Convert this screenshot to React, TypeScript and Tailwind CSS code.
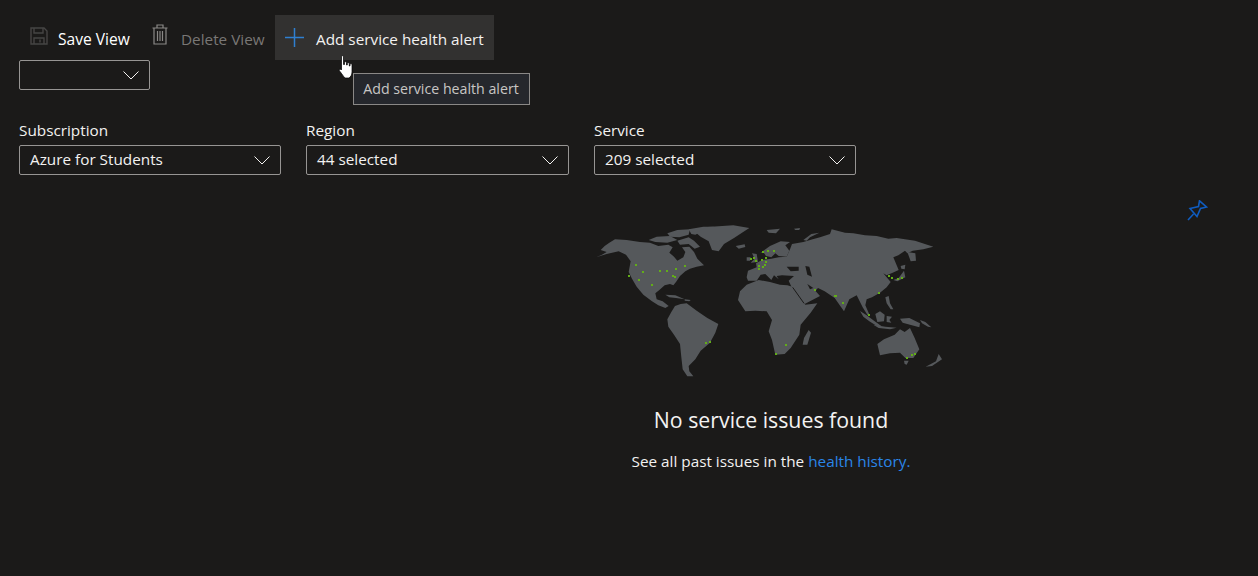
const landShapes = [
  // north america
  "M18 124 36 116 50 108 32 102 44 90 58 80 75 70 110 72 150 78 180 80 205 90 235 86 248 94 238 110 252 122 262 134 280 124 286 108 276 94 298 92 312 108 322 128 342 148 320 152 300 158 286 166 270 180 258 198 250 208 240 204 224 208 208 222 196 232 200 250 218 256 236 270 226 276 205 268 186 256 160 236 140 212 126 188 116 168 122 136 108 116 86 106 50 114Z",
  // canadian arctic
  "M176 72 200 62 240 60 262 72 232 80 196 78Z",
  "M232 52 262 42 300 40 296 56 268 64 240 62Z",
  "M262 74 296 64 312 74 330 92 314 98 296 84 270 86Z",
  "M296 40 340 32 372 32 340 44 316 56 304 54Z",
  // greenland
  "M318 50 352 33 430 28 478 36 456 50 432 66 402 84 386 106 366 102 356 76 332 62Z",
  // iceland
  "M437 90 464 85 466 93 446 98Z",
  // caribbean
  "M226 236 256 238 284 250 258 246 238 244Z",
  "M284 250 302 252 298 256 284 254Z",
  // south america
  "M232 310 244 288 255 270 272 264 290 262 320 284 352 306 385 324 376 350 360 380 332 404 316 430 296 450 298 466 310 481 292 481 278 460 274 424 270 384 252 356 235 332Z",
  // africa
  "M444 252 450 226 470 206 506 192 540 198 570 206 592 208 612 214 632 248 646 266 682 262 662 290 632 326 628 356 602 396 584 414 556 416 546 372 536 346 546 312 530 286 496 284 466 286Z",
  // madagascar
  "M638 386 642 366 656 342 663 350 652 386Z",
  // uk, ireland
  "M486 112 500 114 504 138 482 140 494 128Z",
  "M470 124 482 124 480 134 470 134Z",
  // svalbard and novaya zemlya
  "M530 42 570 38 558 52 536 50Z",
  "M612 38 630 36 628 42 616 42Z",
  "M640 72 664 54 688 50 660 64 650 74Z",
  // scandinavia
  "M510 112 540 90 572 76 600 78 586 88 598 104 590 122 566 120 556 112 544 124 528 120 520 108Z",
  // eurasia
  "M470 184 474 164 500 154 498 142 516 132 544 128 566 124 590 122 600 100 606 84 640 78 668 70 690 64 720 54 725 40 765 50 790 52 825 58 860 60 895 68 920 66 975 74 1030 92 1000 100 968 104 952 112 945 104 925 118 910 124 926 162 908 170 890 178 880 172 902 198 890 214 870 230 846 244 830 250 826 268 840 300 832 296 818 274 800 238 778 250 762 286 734 246 704 226 684 216 676 224 690 240 644 264 622 244 606 216 596 194 612 180 576 178 560 180 566 190 552 178 544 192 526 174 512 176 500 194 474 194Z",
  // kamchatka area
  "M952 108 976 112 978 134 962 136Z",
  // japan
  "M910 192 926 186 942 164 946 184 922 196Z",
  "M932 150 946 146 944 160 934 158Z",
  // southeast asia
  "M886 244 896 240 900 262 910 280 902 280 890 262Z",
  "M810 285 830 298 852 314 874 330 864 332 838 316 820 302Z",
  "M856 294 870 286 884 296 882 316 862 318Z",
  "M850 326 886 332 920 335 900 340 866 336Z",
  "M890 300 906 302 898 312 904 320 890 318Z",
  "M930 308 958 306 990 322 988 334 960 326 938 320Z",
  "M990 312 1006 318 1024 334 1014 332 996 322Z",
  // australia
  "M862 384 882 370 914 356 930 340 944 348 960 336 974 366 988 400 970 426 946 426 930 410 900 412 870 418Z",
  "M942 434 956 434 950 446 944 444Z",
  // new zealand
  "M1007 452 1038 436 1046 414 1056 430 1026 450Z",
];

const darkShapes = [
  "M590 152 626 152 626 164 602 166Z",
  "M646 150 658 152 666 182 652 176Z",
  "M652 204 670 216 660 220Z",
];

const dots = [
  [138, 148], [159, 168], [118, 179], [146, 193], [186, 207], [211, 166], [230, 165], [257, 159],
  [285, 150], [250, 180], [255, 183], [482, 128], [491, 127], [499, 136], [516, 132], [527, 127],
  [527, 138], [526, 147], [518, 152], [507, 151], [507, 160], [518, 109], [533, 106], [551, 104],
  [675, 221], [735, 240], [738, 241], [759, 260], [838, 297], [866, 230], [896, 181], [905, 187],
  [925, 189], [937, 185], [349, 380], [360, 377], [589, 386], [559, 414], [951, 426], [967, 417], [975, 413],
];

function Chevron() {
  return (
    <svg width="16" height="16" viewBox="0 0 16 16" fill="none" stroke="#f3f2f1" strokeWidth="1">
      <path d="M0.5 4.5 8 12 15.5 4.5" />
    </svg>
  );
}

function Select({ value, width }: { value?: string; width: string }) {
  return (
    <div className={`flex h-[30px] items-center justify-between rounded-[2px] border border-[#979593] px-[10px] text-[#f3f2f1] ${width}`}>
      <span className="pb-[1px]">{value}</span>
      <Chevron />
    </div>
  );
}

function Filter({ label, value, width }: { label: string; value: string; width: string }) {
  return (
    <div className={`flex flex-col ${width}`}>
      <span className="h-[25px] leading-[20px] text-[#f3f2f1]">{label}</span>
      <Select value={value} width="w-full" />
    </div>
  );
}

function WorldMap() {
  return (
    <svg width="360" height="170" viewBox="0 0 1080 510" className="mr-[2px]">
      {landShapes.map((d, i) => (
        <path key={i} d={d} fill="#55585b" />
      ))}
      {darkShapes.map((d, i) => (
        <path key={i} d={d} fill="#1b1a19" />
      ))}
      <path d="M608 214 642 262" fill="none" stroke="#1b1a19" strokeWidth="3" />
      {dots.map(([x, y], i) => (
        <rect key={i} x={Math.round(x / 3) * 3 - 3} y={Math.round(y / 3) * 3 - 3} width="6" height="6" fill="#62ad18" />
      ))}
    </svg>
  );
}

export default function App() {
  return (
    <main className="relative h-[576px] w-[1258px] overflow-hidden bg-[#1b1a19] font-['Open_Sans','Noto_Sans',sans-serif] text-[15.3px] text-white">
      <div className="flex h-[60px] items-end pl-[20px]">
        <div className="flex h-[45px] w-[121px] items-center pl-[10px]">
          <svg width="18" height="18" viewBox="0 0 18 18" fill="none" stroke="#464544" strokeWidth="1.400" className="mb-[3px] mr-[10px] shrink-0">
            <path d="M1 1h13l3 3v13H1z" />
            <path d="M4 1v5h9V1M4 17v-6h10v6M10 12.500v3" />
          </svg>
          <span className="pt-[4px] text-[15.600px]">Save View</span>
        </div>
        <div className="flex h-[45px] w-[134px] items-center pl-[11px]">
          <svg width="16" height="21" viewBox="0 0 16 21" fill="none" stroke="#8a8886" strokeWidth="1.200" className="mb-[6px] mr-[13px] shrink-0">
            <path d="M0.500 4h15M5 4V1h6v3M2 4v16h12V4M5.500 7v10M8 7v10M10.500 7v10" />
          </svg>
          <span className="pt-[4px] text-[#797775]">Delete View</span>
        </div>
        <div className="flex h-[45px] w-[219px] items-center bg-[#323130] pl-[10px]">
          <svg width="19" height="19" viewBox="0 0 19 19" stroke="#2f7fd0" strokeWidth="1.500" className="mr-[12px] shrink-0">
            <path d="M9.500 0v19M0 9.500h19" />
          </svg>
          <span className="pt-[4px] text-[#f3f2f1]">Add service health alert</span>
        </div>
      </div>

      <div className="pl-[19px]">
        <Select width="w-[131px]" />
      </div>

      <div className="mt-[30px] flex gap-[25px] pl-[19px]">
        <Filter label="Subscription" value="Azure for Students" width="w-[262px]" />
        <Filter label="Region" value="44 selected" width="w-[263px]" />
        <Filter label="Service" value="209 selected" width="w-[262px]" />
      </div>

      <div className="flex justify-end pr-[50px] pt-[25px]">
        <svg width="21" height="21" viewBox="0 0 21 21" fill="none" stroke="#0f5cc0" strokeWidth="1.600">
          <path d="M1 20 6.500 14M3 8.500 11.500 6.500 12.500 0.800 19.500 7 13.500 8.500 10 16.500Z" />
        </svg>
      </div>

      <div className="-mt-[5px] flex flex-col items-center pl-[284px]">
        <WorldMap />
        <h2 className="mt-[19px] text-[21.300px] leading-[30px] text-[#f3f2f1]">No service issues found</h2>
        <p className="mt-[15px] text-[#f3f2f1]">
          See all past issues in the <span className="text-[#2a86e8]">health history.</span>
        </p>
      </div>

      <div className="absolute left-[353px] top-[73px] flex h-[32px] w-[177px] items-center justify-center border border-[#8a8886] bg-[#25272c] pr-[1px] text-[14.200px] text-[#c8c6c4]">
        Add service health alert
      </div>

      <svg className="absolute left-[338px] top-[55px]" width="17" height="24" viewBox="0 0 17 24" fill="#fff" stroke="#000" strokeWidth="0.700">
        <path d="M3.500 1.500c0-1 2-1 2 0v8l1 0V7.500c0-1 2-1 2 0v2.500h.8V8.500c0-1 2-1 2 0V11h.7V9.500c0-1 2-1 2 0V17c0 3-1.500 5-3 6H7c-1.500-1.500-3-4-5-6.500-1.500-1.500-.5-3 1-2l.5.500z" />
      </svg>
    </main>
  );
}
